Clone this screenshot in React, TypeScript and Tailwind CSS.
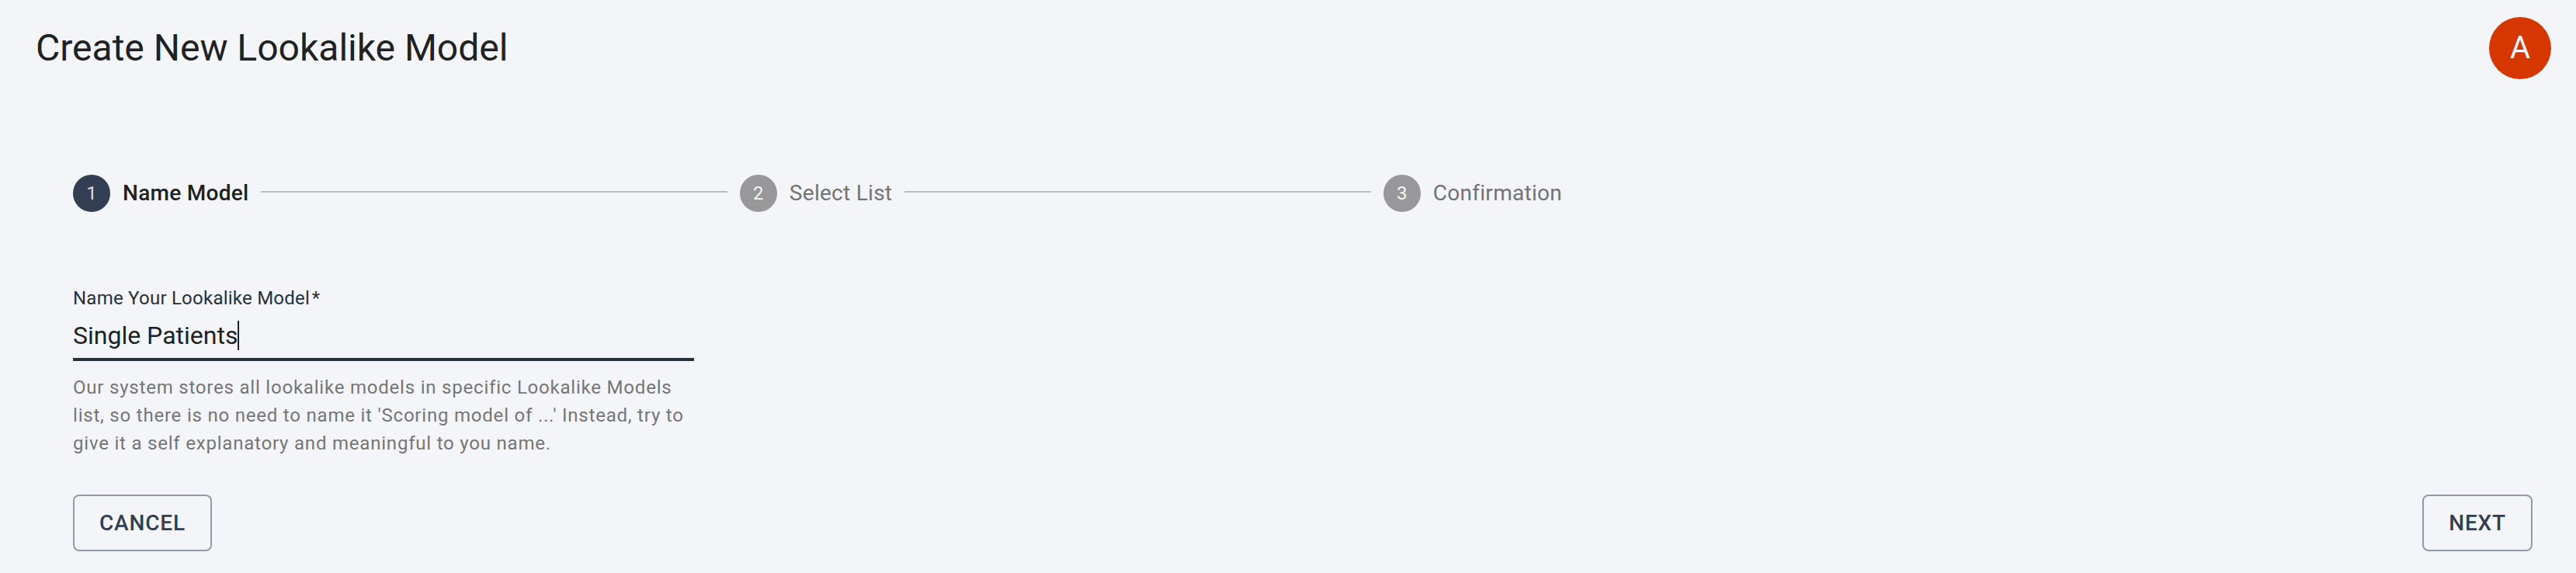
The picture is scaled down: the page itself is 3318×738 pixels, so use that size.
import { Fragment } from "react";

const steps = ["Name Model", "Select List", "Confirmation"];

const actionButton =
  "rounded-lg border-2 border-[#929aa5] px-8 py-[10px] text-[28px] leading-[49px] font-medium tracking-[0.03em] text-[#323e51]";

export default function App() {
  return (
    <div className="min-h-screen bg-[#f4f5f9] font-[Roboto,sans-serif] text-[#202122]">
      <header className="flex items-center justify-between pt-[22px] pr-8 pl-[46px]">
        <h1 className="text-[48px] leading-[80px]">Create New Lookalike Model</h1>
        <button type="button" aria-label="Account A" className="size-20 rounded-full bg-[#d63600] text-[40px] text-[#f4f5f9]">
          A
        </button>
      </header>
      <main className="pt-[123px] pr-14 pb-7 pl-[94px]">
        <ol className="flex w-[1918px] max-w-full items-center">
          {steps.map((step, i) => (
            <Fragment key={step}>
              {i > 0 && <li aria-hidden="true" className="mx-4 mb-1 h-0.5 flex-1 bg-[#bdbdbd]" />}
              <li aria-current={i === 0 ? "step" : undefined} className="flex items-center gap-4">
                <span
                  className={`flex size-12 items-center justify-center rounded-full text-2xl ${
                    i ? "bg-[#98989a] text-[#f4f5f9]" : "bg-[#323e51] text-[#dcdee2]"
                  }`}
                >
                  {i + 1}
                </span>
                <span className={`text-[28px] leading-10 tracking-[0.01em] ${i ? "text-[#727375]" : "font-medium"}`}>{step}</span>
              </li>
            </Fragment>
          ))}
        </ol>
        <form>
          <div className="mt-[95px] w-[800px] max-w-full">
            <label htmlFor="name" className="block text-2xl tracking-[0.01em] text-[#28303c]">
              Name Your Lookalike Model&#8202;*
            </label>
            <div className="relative">
              <input
                id="name"
                required
                defaultValue="Single Patients"
                className="block h-[65px] w-full border-b-4 border-[#28303c] pt-0.5 text-[32px] caret-transparent outline-none"
              />
              <span aria-hidden="true" className="absolute top-[13px] left-[212px] h-[38px] w-0.5 bg-[#202122]" />
            </div>
            <p className="mt-4 text-2xl leading-9 tracking-[0.033em] text-[#757678]">
              Our system stores all lookalike models in specific Lookalike Models list, so there is no need to name it
              'Scoring model of ...' Instead, try to give it a self explanatory and meaningful to you name.
            </p>
          </div>
          <div className="mt-12 flex justify-between">
            <button type="button" className={actionButton}>CANCEL</button>
            <button type="button" className={actionButton}>NEXT</button>
          </div>
        </form>
      </main>
    </div>
  );
}
